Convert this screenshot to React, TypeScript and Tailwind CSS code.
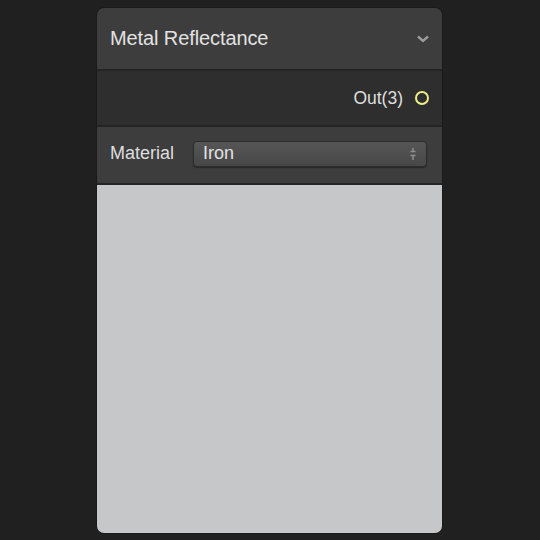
import React from 'react';

const font = { fontFamily: '"Liberation Sans", Arial, sans-serif' };

export default function App() {
  return (
    <div className="w-[540px] h-[540px] bg-[#202020] pt-[7px] pl-[96px]" style={font}>
      <div className="w-[347px] h-[527px] flex flex-col rounded-[8px] overflow-hidden border border-[#1a1a1a] bg-[#232323]">
        {/* Header */}
        <div className="h-[63px] shrink-0 flex items-center justify-between pl-[13px] pr-[12px] pb-[2px] bg-[#3d3d3d] border-b-2 border-[#242424]">
          <span className="text-[20px] text-[#e2e2e2] tracking-[-0.1px]">Metal Reflectance</span>
          <svg width="14" height="10" viewBox="0 0 14 10" className="mt-[2px]">
            <path d="M2 2.5 L7 7 L12 2.5" fill="none" stroke="#9a9a9a" strokeWidth="2.4" />
          </svg>
        </div>
        {/* Output row */}
        <div className="h-[56px] shrink-0 flex items-center justify-end pr-[13px] bg-[#2e2e2e] border-b-2 border-[#242424]">
          <span className="text-[17.5px] text-[#dedede] mr-[12px]">Out(3)</span>
          <span className="w-[14px] h-[14px] rounded-full border-2 border-[#eeee88]" />
        </div>
        {/* Material row */}
        <div className="h-[58px] shrink-0 flex items-center pl-[13px] pr-[15px] pb-[3px] bg-[#3d3d3d] border-b-2 border-[#242424]">
          <span className="text-[18px] text-[#dedede] w-[83px]">Material</span>
          <div className="flex-1 h-[26px] flex items-center justify-between pl-[9px] pr-[9px] rounded-[4px] border border-[#2c2c2c] bg-gradient-to-b from-[#565656] to-[#474747] shadow-[0_1px_1px_rgba(0,0,0,0.35)]">
            <span className="text-[18px] text-[#e2e2e2]">Iron</span>
            <svg width="8" height="14" viewBox="0 0 8 14">
              <path d="M4 1 L4 4 M1.5 4.5 L6.5 4.5 M1.5 8.5 L6.5 8.5 M4 9 L4 13" stroke="#8e8e8e" strokeWidth="1.5" fill="none" />
            </svg>
          </div>
        </div>
        {/* Preview */}
        <div className="flex-1 bg-[#c6c7c9]" />
      </div>
    </div>
  );
}
